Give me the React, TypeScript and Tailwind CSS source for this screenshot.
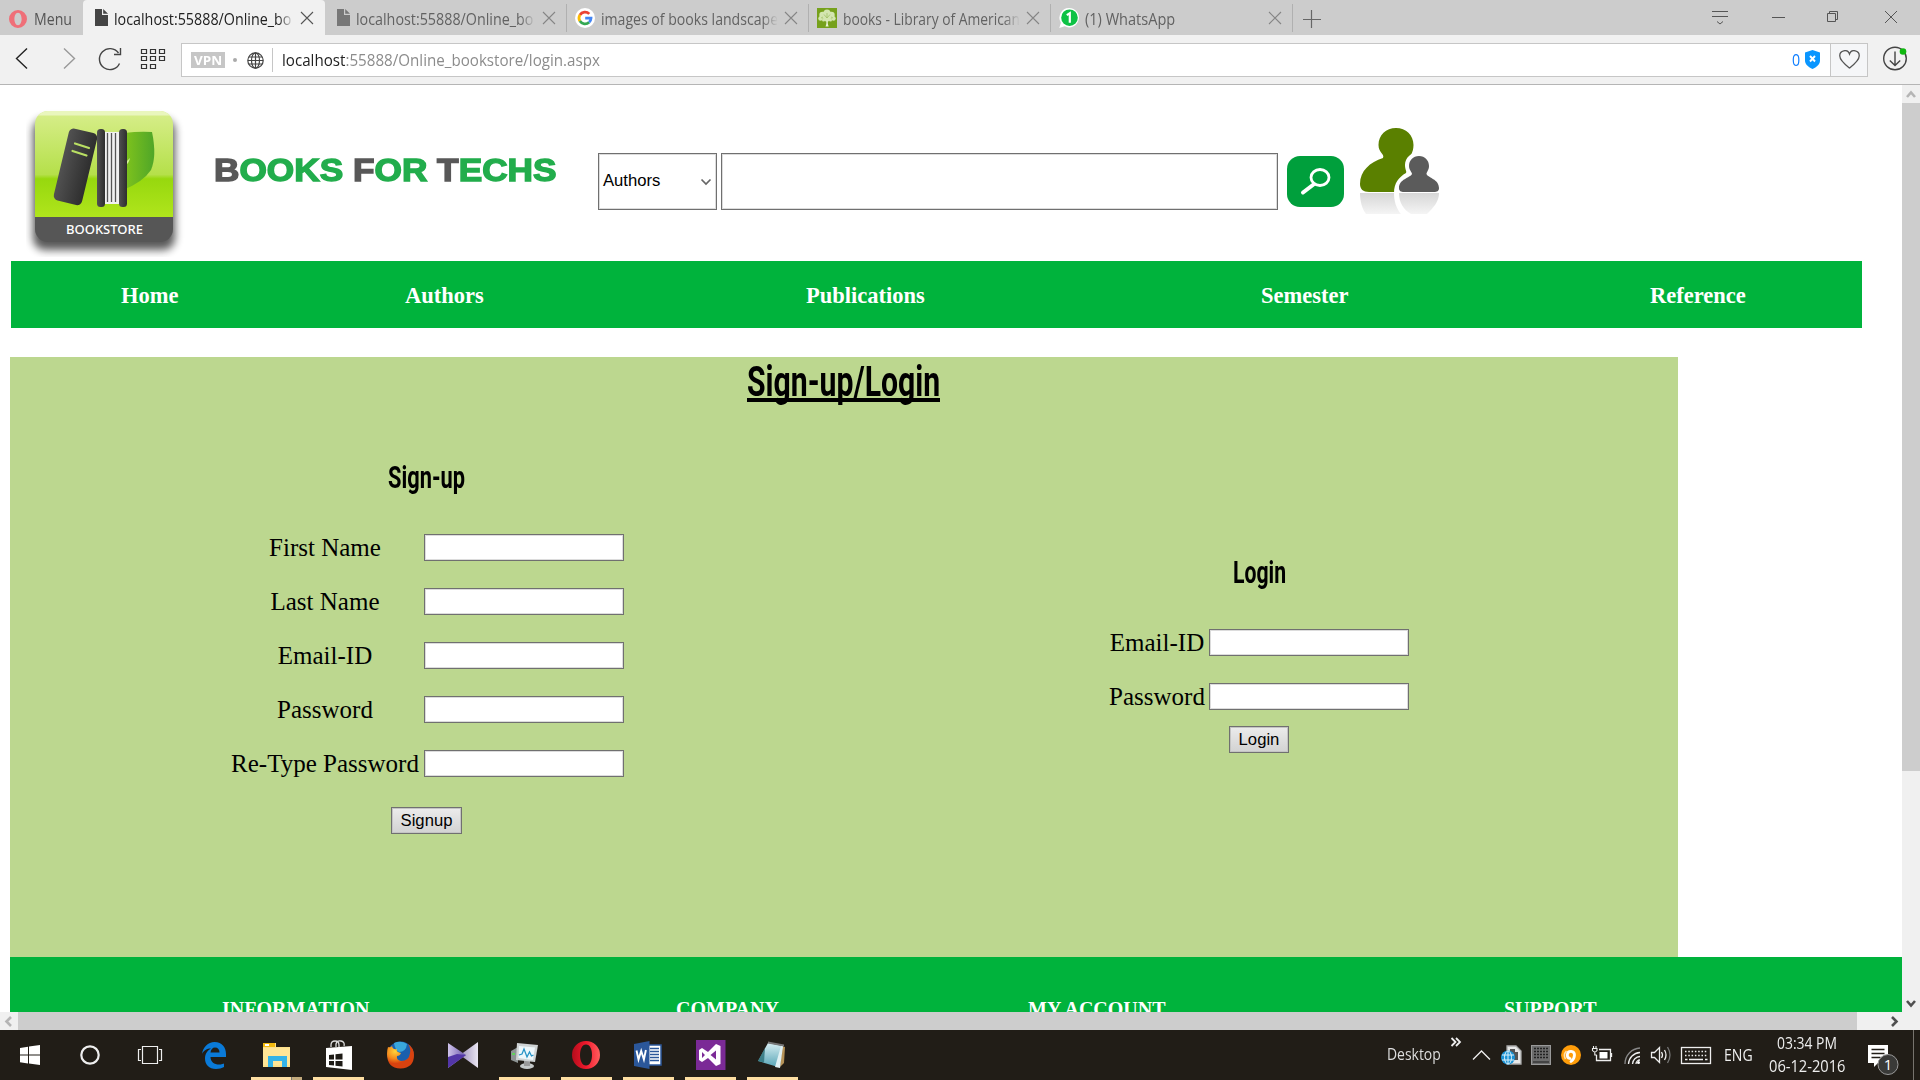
import React, { useLayoutEffect, useRef, useState } from 'react';

/** Single-line text squeezed or stretched horizontally to a given width. */
function Fit({ w, className = '', children }: { w: number; className?: string; children: React.ReactNode }) {
  const ref = useRef<HTMLSpanElement>(null);
  const [scale, setScale] = useState(1);
  useLayoutEffect(() => {
    if (ref.current) setScale(w / ref.current.offsetWidth);
  }, [w]);
  return (
    <span className={`block shrink-0 whitespace-nowrap ${className}`} style={{ width: w }}>
      <span ref={ref} className="inline-block origin-left" style={{ transform: `scaleX(${scale})` }}>
        {children}
      </span>
    </span>
  );
}

const ui = "font-['Open_Sans',sans-serif]";

function PageIcon({ color }: { color: string }) {
  return (
    <svg width="13" height="17" viewBox="0 0 13 17" className="shrink-0">
      <path d="M0 0h7v6h6v11H0z" fill={color} />
      <path d="M8.2 0L13 4.8H8.2z" fill={color} />
    </svg>
  );
}

function GoogleIcon() {
  return (
    <svg width="20" height="20" viewBox="0 0 20 20" className="shrink-0">
      <circle cx="10" cy="10" r="10" fill="#fff" />
      <g fill="none" strokeWidth="2.8">
        <path d="M14.3 5.9A6 6 0 0 0 4.9 6.9" stroke="#ea4335" />
        <path d="M4.9 6.9a6 6 0 0 0 0 6.2" stroke="#fbbc05" />
        <path d="M4.9 13.1a6 6 0 0 0 9.2 1.2" stroke="#34a853" />
        <path d="M14.1 14.3A6 6 0 0 0 16 10.2h-5.8" stroke="#4285f4" />
      </g>
    </svg>
  );
}

function TreeIcon() {
  return (
    <svg width="20" height="20" viewBox="0 0 20 20" className="shrink-0">
      <rect width="20" height="20" fill="#76a11c" />
      <g fill="#d3e5b0">
        <circle cx="10" cy="5" r="3.600" /><circle cx="5.500" cy="7" r="3.200" /><circle cx="14.500" cy="7" r="3.200" />
        <circle cx="3.500" cy="10.500" r="2.200" /><circle cx="16.500" cy="10.500" r="2.200" /><circle cx="10" cy="9.500" r="4" />
        <circle cx="6.500" cy="12" r="1.500" /><circle cx="13.500" cy="12" r="1.500" />
      </g>
      <path d="M8.500 18.500c1-2 1-4 .8-6h1.500c-.1 2-.1 4 .9 6z" fill="#e8f2d4" />
      <path d="M10 10V5M10 10L7 6.500M10 10l3-3.500M4 10l2-1M16 10l-2-1" stroke="#9cbc60" strokeWidth=".7" />
    </svg>
  );
}

function WhatsAppIcon() {
  return (
    <svg width="20" height="20" viewBox="0 0 20 20" className="shrink-0">
      <path d="M10.300 0a9.700 9.700 0 1 1-4.600 18.300L.3 20l1.600-5.200A9.700 9.700 0 0 1 10.300 0z" fill="#fff" />
      <circle cx="10.500" cy="9.700" r="8.300" fill="#0ec245" />
      <path d="M7.800 7.200l3-2v9.500" stroke="#fff" strokeWidth="2.200" fill="none" />
    </svg>
  );
}

function Close({ color }: { color: string }) {
  return (
    <svg width="14" height="14" viewBox="0 0 14 14" className="shrink-0">
      <path d="M1 1l12 12M13 1L1 13" stroke={color} strokeWidth="1.100" />
    </svg>
  );
}

type TabProps = { icon: React.ReactNode; iconW: string; title: string; w: number; active?: boolean; divider?: boolean };

function Tab({ icon, iconW, title, w, active, divider }: TabProps) {
  return (
    <div className={`relative flex h-[35px] w-[242px] shrink-0 items-center ${active ? 'rounded-t-sm bg-[#f1f1f1]' : ''}`}>
      <span className={`flex shrink-0 justify-end ${iconW}`}>{icon}</span>
      <div className="relative flex h-7 flex-1 items-center pt-0.5 pl-1.5">
        <Fit w={w} className={`${ui} text-[16px] ${active ? 'text-[#222]' : 'text-[#626262]'}`}>{title}</Fit>
        {w > 150 && (
          <span className={`absolute top-0 right-0 h-full w-4 bg-linear-to-r from-transparent ${active ? 'to-[#f1f1f1]' : 'to-[#ccc]'}`} />
        )}
      </div>
      <span className="flex w-[31px] shrink-0 pl-1.5"><Close color={active ? '#555' : '#858585'} /></span>
      {divider && <span className="absolute top-1 right-0 h-7 w-px bg-[#b0b0b0]" />}
    </div>
  );
}

function TabBar() {
  return (
    <div className="flex h-[35px] bg-[#ccc]">
      <div className="flex w-[83px] shrink-0 items-center gap-[7px] pt-0.5 pl-[9px]">
        <svg width="18" height="18" viewBox="0 0 18 18">
          <path fillRule="evenodd" fill="#ef6f78" d="M9 0a9 9 0 1 1 0 18A9 9 0 0 1 9 0zm0 2.800c-2.300 0-3.600 3-3.600 6.200s1.300 6.200 3.600 6.200 3.600-3 3.600-6.200S11.300 2.800 9 2.800z" />
        </svg>
        <Fit w={38} className={`${ui} text-[16px] text-[#555]`}>Menu</Fit>
      </div>
      <Tab icon={<PageIcon color="#444" />} iconW="w-[25px]" title="localhost:55888/Online_bo" w={177} active />
      <Tab icon={<PageIcon color="#777" />} iconW="w-[25px]" title="localhost:55888/Online_bo" w={177} divider />
      <Tab icon={<GoogleIcon />} iconW="w-[28px]" title="images of books landscape" w={177} divider />
      <Tab icon={<TreeIcon />} iconW="w-[28px]" title="books - Library of American" w={177} divider />
      <Tab icon={<WhatsAppIcon />} iconW="w-[28px]" title="(1) WhatsApp" w={90} divider />
      <svg width="18" height="18" viewBox="0 0 18 18" className="mt-[10px] ml-[10px] shrink-0">
        <path d="M8.500 0v18M0 9.500h18" stroke="#666" strokeWidth="1.200" />
      </svg>
      <svg width="220" height="35" viewBox="-20 0 220 35" className="ml-auto shrink-0" fill="none" stroke="#555">
        <path d="M52 17.500h13" />
        <path d="M107.500 13.500h8v8h-8zM109.500 13v-1.500h8v8H116" />
        <path d="M165 11l12 12M177 11l-12 12" />
        <path d="M-8 11.500H8M-8 16.500H8M-3 21.500l3 2.500 3-2.500" />
      </svg>
    </div>
  );
}

function Toolbar() {
  return (
    <div className="flex h-[50px] items-start border-b border-[#b5b5b5] bg-[#f1f1f1] pt-2">
      <svg width="181" height="34" viewBox="0 0 181 34" className="shrink-0" fill="none" stroke="#444" strokeWidth="1.400">
        <path d="M27 5.500L16.500 15.500 27 25.500" stroke="#222" />
        <path d="M64 5.500L74.500 15.500 64 25.500" stroke="#999" />
        <path d="M119.500 20.500a10.500 10.500 0 1 1-1-10.500M120.500 5v6.500h-6.500" />
        <path d="M141.500 6.500h5v4h-5zM150.500 6.500h5v4h-5zM159.500 6.500h5v4h-5zM141.500 13.500h5v4h-5zM150.500 13.500h5v4h-5zM159.500 13.500h5v4h-5zM141.500 21.500h5v4h-5zM150.500 21.500h5v4h-5z" stroke="#333" strokeWidth="1.200" />
      </svg>
      <div className="flex h-[34px] w-[1687px] shrink-0 items-center border border-[#c6c6c6] bg-white pl-[9px]">
        <span className={`flex h-4 w-[34px] items-center justify-center bg-[#c6c6c6] ${ui}`}>
          <Fit w={28} className="text-[13px] leading-4 font-bold text-white">VPN</Fit>
        </span>
        <span className="ml-2 h-1 w-1 rounded-full bg-[#aaa]" />
        <svg width="17" height="17" viewBox="0 0 17 17" className="ml-2.5" fill="none" stroke="#444" strokeWidth="1.200">
          <circle cx="8.500" cy="8.500" r="7.700" /><ellipse cx="8.500" cy="8.500" rx="4" ry="7.700" />
          <path d="M8.500 1v15M1 8.500h15M2 5h13M2 12h13" />
        </svg>
        <span className="ml-2 h-6 w-px bg-[#c6c6c6]" />
        <Fit w={318} className={`ml-[9px] text-[16px] text-[#8c8c8c] ${ui}`}>
          <span className="text-[#222]">localhost</span>:55888/Online_bookstore/login.aspx
        </Fit>
        <Fit w={8} className={`ml-auto text-[16px] text-[#0a7cff] ${ui}`}>0</Fit>
        <svg width="15" height="19" viewBox="0 0 15 19" className="mr-[10px] mb-0.5 ml-[5px]">
          <path d="M7.500 0L15 2.500v8c0 4-3.500 6.500-7.500 8.500C3.500 17 0 14.500 0 10.500v-8z" fill="#0a96ff" />
          <path d="M5 6l5 5.500M10 6l-5 5.500" stroke="#fff" strokeWidth="1.900" />
        </svg>
        <span className="flex h-full w-[37px] shrink-0 items-center justify-center border-l border-[#c6c6c6] bg-[#f5f6f8]">
          <svg width="21" height="19" viewBox="0 0 21 19" className="mb-0.5" fill="none" stroke="#555" strokeWidth="1.300">
            <path d="M10.500 18C6 14.500.8 10.500.8 6A5 5 0 0 1 10.500 4 5 5 0 0 1 20.200 6c0 4.500-5.200 8.500-9.700 12z" />
          </svg>
        </span>
      </div>
      <svg width="26" height="26" viewBox="0 0 26 26" className="mt-[3px] ml-[14px] shrink-0" fill="none" stroke="#444" strokeWidth="1.400">
        <circle cx="13" cy="12.500" r="11.300" /><path d="M13 5.500v14M7.800 14.500L13 19.500l5.200-5" />
        <circle cx="21" cy="5.500" r="3.300" fill="#0fb80f" stroke="none" />
      </svg>
    </div>
  );
}

function Logo() {
  return (
    <svg width="160" height="150" viewBox="0 0 160 150" className="shrink-0">
      <defs>
        <linearGradient id="lg" x1="0" y1="0" x2="0" y2="1">
          <stop offset="0" stopColor="#d8ee8c" /><stop offset=".6" stopColor="#b5e04a" />
          <stop offset=".64" stopColor="#97d80e" /><stop offset="1" stopColor="#b0e51c" />
        </linearGradient>
        <linearGradient id="leaf"><stop offset="0" stopColor="#83c51c" /><stop offset="1" stopColor="#4fa628" /></linearGradient>
        <linearGradient id="bk"><stop offset="0" stopColor="#515151" /><stop offset="1" stopColor="#2e2e2e" /></linearGradient>
        <clipPath id="tile"><rect x="9" y="4" width="138" height="131" rx="13" /></clipPath>
        <filter id="sh" x="-20%" y="-20%" width="140%" height="140%"><feGaussianBlur stdDeviation="4.500" /></filter>
      </defs>
      <rect x="7" y="12" width="142" height="131" rx="12" fill="#000" opacity=".65" filter="url(#sh)" />
      <g clipPath="url(#tile)">
        <rect x="9" y="4" width="138" height="106" fill="url(#lg)" />
        <rect x="9" y="4" width="138" height="4.500" fill="#e9f6bd" />
        <rect x="9" y="110" width="138" height="26" fill="#565656" />
      </g>
      <path d="M98 26q16-2 28-1 5 24-1 38-8 12-28 20z" fill="url(#leaf)" />
      <path d="M100 58q3-2 4-7l-3 3z" fill="#d6ef9a" />
      <rect x="0" y="0" width="29" height="74" rx="5" transform="translate(44 20.500) rotate(13.500)" fill="url(#bk)" />
      <path d="M49 36.500l14 4.500M46.500 44l14 4.500" stroke="#b9df63" strokeWidth="2.200" strokeLinecap="round" />
      <rect x="78" y="25" width="16" height="72" fill="#f1f1f1" />
      <path d="M81.500 26v69M85.500 26v69M89.500 26v69" stroke="#555" strokeWidth="1.300" />
      <rect x="71" y="22" width="8" height="78" rx="3.500" fill="url(#bk)" />
      <rect x="93" y="22" width="8" height="78" rx="3.500" fill="url(#bk)" />
      <text x="40" y="127" textLength="77" lengthAdjust="spacingAndGlyphs" fontFamily="Noto Sans, sans-serif" fontWeight="500" fontSize="13" fill="#fff">BOOKSTORE</text>
    </svg>
  );
}

function Header() {
  const field = 'border border-[#707070] bg-white shadow-[inset_0_0_0_1px_#dcdcdc]';
  return (
    <div className="flex h-[176px] items-start pl-[26px]">
      <div className="mt-[22px] flex"><Logo /></div>
      <Fit w={342} className="mt-[65px] ml-[28px] font-['Liberation_Sans',sans-serif] text-[31px] leading-[42px] font-bold text-[#22ad4c] [-webkit-text-stroke:1.4px_#22ad4c]">
        <span className="text-[#585858] [-webkit-text-stroke:1.4px_#585858]">B</span>OOKS{' '}
        <span className="text-[#585858] [-webkit-text-stroke:1.4px_#585858]">F</span>OR{' '}
        <span className="text-[#585858] [-webkit-text-stroke:1.4px_#585858]">T</span>ECHS
      </Fit>
      <div className={`mt-[68px] ml-[42px] flex h-[57px] w-[119px] shrink-0 items-center justify-between pr-1 pb-0.5 pl-[4px] font-['Liberation_Sans',sans-serif] text-[16.67px] text-black ${field}`}>
        <span>Authors</span>
        <svg width="12" height="8" viewBox="0 0 12 8" className="mt-0.5"><path d="M1.500 1.500L6 6l4.500-4.500" fill="none" stroke="#666" strokeWidth="1.700" /></svg>
      </div>
      <input className={`mt-[68px] ml-1 h-[57px] w-[557px] shrink-0 ${field}`} />
      <svg width="57" height="51" viewBox="0 0 57 51" className="mt-[71px] ml-[9px] shrink-0">
        <rect width="57" height="51" rx="13" fill="#009f3c" />
        <ellipse cx="33" cy="21.500" rx="9" ry="8" fill="none" stroke="#fff" strokeWidth="2.800" />
        <path d="M26.500 28.500L16 36.500" stroke="#fff" strokeWidth="4" strokeLinecap="round" />
      </svg>
      <svg width="82" height="90" viewBox="0 0 82 90" className="mt-[42px] ml-[15px] shrink-0">
        <defs>
          <linearGradient id="refl" x1="0" y1="0" x2="0" y2="1"><stop offset="0" stopColor="#d6d6d6" /><stop offset="1" stopColor="#f5f5f5" /></linearGradient>
        </defs>
        <path d="M37 1c10 0 17.500 7 17.500 17 0 8-4 11-5 17-.5 6 5 9 10 14L68 65H10c-6 0-9-3-9-8C1 44 11 35 24 31c2-4-4.500-5-4.500-13C19.500 8 27 1 37 1z" fill="#5a8000" />
        <path d="M60 25c-8 0-14 6-14 13 0 5 2 6 1 8-7 4-12 10-12 20h46V40z" fill="#fff" />
        <path d="M60 29c6 0 10 4.500 10 10 0 4-2.500 6-2.500 8C69 51 80 52 80 61c0 3-2 4-5 4H45c-3 0-5-1-5-4 0-9 11-10 13-14 0-2-3-4-3-8 0-5.500 4-10 10-10z" fill="#5b5b5b" />
        <path d="M1 66h34c0 8 2 15 7 21H7C3 82 1 74 1 66zM40 66h40c0 9-6 15-12 21H52c-7-4-12-11-12-21z" fill="url(#refl)" />
      </svg>
    </div>
  );
}

function Nav() {
  return (
    <nav className="ml-[11px] grid h-[67px] w-[1851px] grid-cols-[284px_401px_455px_389px_auto] items-center bg-[#00b33c] pt-0.5 pl-[110px] font-['Liberation_Serif',serif] text-[22.5px] font-bold text-white">
      <span>Home</span><span>Authors</span><span>Publications</span><span>Semester</span><span>Reference</span>
    </nav>
  );
}

const agency = "font-['Roboto',sans-serif] font-bold text-black";

function Field({ label, cell }: { label: string; cell: string }) {
  return (
    <div className="flex h-[54px] items-center">
      <label className={`shrink-0 pt-0.5 text-center whitespace-nowrap ${cell}`}>{label}</label>
      <input className="h-[27px] w-[200px] shrink-0 border border-[#707070] bg-white shadow-[inset_0_0_0_1px_#dcdcdc]" />
    </div>
  );
}

function FormButton({ children, size }: { children: React.ReactNode; size: string }) {
  return (
    <button className={`h-[27px] border border-[#707070] bg-linear-to-b from-[#ececec] to-[#d2d2d2] font-['Liberation_Sans',sans-serif] text-[16.67px] leading-[24px] text-black shadow-[inset_0_0_0_1px_#c4c4c4] ${size}`}>
      {children}
    </button>
  );
}

function Panel() {
  return (
    <main className="mt-[29px] ml-[10px] h-[600px] w-[1668px] bg-[#bcd78f] font-['Liberation_Serif',serif] text-[25px] text-black">
      <div className="ml-[737px] flex h-[53px] w-[193px] flex-col">
        <Fit w={193} className={`${agency} h-[41px] text-[43px] leading-[48px]`}>Sign-up/Login</Fit>
        <span className="h-1 bg-black" />
      </div>
      <div className="flex">
        <section className="ml-[221px] flex w-[393px] flex-col items-center">
          <Fit w={77} className={`${agency} mt-[47px] mr-[2px] h-[63px] text-[32px] leading-[40px]`}>Sign-up</Fit>
          <Field label="First Name" cell="mr-[5px] w-[188px]" />
          <Field label="Last Name" cell="mr-[5px] w-[188px]" />
          <Field label="Email-ID" cell="mr-[5px] w-[188px]" />
          <Field label="Password" cell="mr-[5px] w-[188px]" />
          <Field label="Re-Type Password" cell="mr-[5px] w-[188px]" />
          <div className="mt-[17px] mr-[2px] flex"><FormButton size="w-[71px]">Signup</FormButton></div>
        </section>
        <section className="ml-[485px] flex w-[300px] flex-col items-center">
          <Fit w={53} className={`${agency} mt-[142px] h-[63px] text-[32px] leading-[40px]`}>Login</Fit>
          <Field label="Email-ID" cell="mr-[4px] w-[96px]" />
          <Field label="Password" cell="mr-[4px] w-[96px]" />
          <div className="mt-[3px] flex"><FormButton size="w-[60px]">Login</FormButton></div>
        </section>
      </div>
    </main>
  );
}

function Footer() {
  return (
    <footer className="ml-[10px] grid h-[55px] grid-cols-[454px_352px_476px_auto] overflow-hidden bg-[#00b33c] pt-[41px] pl-[212px] font-['Liberation_Serif',serif] text-[20px] leading-[23px] font-bold text-white">
      <span>INFORMATION</span><span>COMPANY</span><span>MY ACCOUNT</span><span>SUPPORT</span>
    </footer>
  );
}

function Chevron({ d, color }: { d: string; color: string }) {
  return <svg width="18" height="18" viewBox="0 0 18 18" className="shrink-0"><path d={d} fill="none" stroke={color} strokeWidth="2.600" /></svg>;
}

const taskIcons: { icon: React.ReactNode; bar?: boolean; stacked?: boolean }[] = [
  { stacked: true, bar: true, icon: (
    <svg width="30" height="30" viewBox="0 0 30 30"><path d="M1 3h13v4h14v20H1z" fill="#fde08a" /><path d="M1 3h12v4H1z" fill="#f2b90f" /><path d="M3 4h4v2H3z" fill="#fff" /><path d="M1 8h27v17H1z" fill="#ffe596" /><path d="M6 27V16h19v11h-5v-6h-9v6z" fill="#33b3e8" /></svg>) },
  { bar: true, icon: (
    <svg width="30" height="30" viewBox="0 0 30 30"><path d="M7 7V5q0-4 4-4t4 4v2M12 7V4q1-4 5-3t3 5" fill="none" stroke="#ddd" strokeWidth="1.300" /><path d="M2 8l26-2v24L2 27z" fill="#fff" /><path d="M5 15l5-.5v5H5zM11.500 14.200l7-.7v6h-7zM5 21h5v4.500L5 25zM11.500 21h7v5.500l-7-.7z" fill="#1e1b16" /></svg>) },
  { icon: (
    <svg width="30" height="30" viewBox="0 0 30 30"><defs><radialGradient id="ff" cx=".3" cy=".3"><stop offset="0" stopColor="#ffd43a" /><stop offset=".6" stopColor="#f58a1c" /><stop offset="1" stopColor="#d8420f" /></radialGradient></defs><circle cx="14.500" cy="14.500" r="13" fill="#1a5fae" /><path d="M8 3q7-3 13 1-1 8-8 8-4-2-5-9z" fill="#39a7dc" /><path d="M2 7q2 1 4-1 1 4 5 3-1 2 1 3l3 1q-1 3-4 3-1 4 4 5 8 0 9-8 1-5-2-9 6 4 6 11 0 13-13.500 13.500Q1 28 1 14 1 10 2 7z" fill="url(#ff)" /></svg>) },
  { icon: (
    <svg width="30" height="30" viewBox="0 0 30 30"><defs><linearGradient id="km"><stop offset="0" stopColor="#cfc3ea" /><stop offset="1" stopColor="#6a56ac" /></linearGradient><linearGradient id="km2"><stop offset="0" stopColor="#9d90bb" /><stop offset="1" stopColor="#eae6f2" /></linearGradient></defs><path d="M30 2v26L12 15z" fill="url(#km2)" /><path d="M0 3l18 12L0 28z" fill="url(#km)" /><path d="M0 28V17l9-3 9 1z" fill="#5336a8" /></svg>) },
  { bar: true, icon: (
    <svg width="30" height="30" viewBox="0 0 30 30"><path d="M1 11l7-4v16l-7-3z" fill="#8d9494" /><path d="M2 13h3v2H2z" fill="#5fd35a" /><ellipse cx="17" cy="26" rx="7" ry="3" fill="#c5c9c9" /><path d="M14 20h6v6h-6z" fill="#999" /><path d="M7 3l21 2-3 17-19-2z" fill="#cfd3d4" /><path d="M9 6l16 1.500L23 20 8.500 18z" fill="#eef7fb" /><path d="M9 15l3-1 2-5 3 8 2.500-5 2 4 2-1" fill="none" stroke="#2793c6" strokeWidth="1.300" /></svg>) },
  { bar: true, icon: (
    <svg width="30" height="30" viewBox="0 0 30 30"><defs><linearGradient id="op"><stop offset="0" stopColor="#b40d1c" /><stop offset=".5" stopColor="#f1192c" /><stop offset="1" stopColor="#ff5e5e" /></linearGradient></defs><path fillRule="evenodd" fill="url(#op)" d="M14 1a14 14 0 1 1 0 28 14 14 0 0 1 0-28zm0 3.500c-4 0-6 5-6 10.500s2 10.500 6 10.500S20 20.500 20 15 18 4.500 14 4.500z" /></svg>) },
  { bar: true, icon: (
    <svg width="30" height="30" viewBox="0 0 30 30"><path d="M13 5h14v20H13z" fill="#fff" stroke="#2b579a" strokeWidth="1.500" /><path d="M16 8.500h9M16 11.500h9M16 14.500h9M16 17.500h9M16 20.500h9" stroke="#2b579a" strokeWidth="1.300" /><path d="M0 4l15.500-3v28L0 26z" fill="#2b579a" /><path d="M2.500 10.500l2 9 2.700-8.500 2.700 8.500 2-9.500" fill="none" stroke="#fff" strokeWidth="1.900" /></svg>) },
  { bar: true, icon: (
    <svg width="30" height="30" viewBox="0 0 30 30"><rect width="29.500" height="30" fill="#7b2a96" /><path fillRule="evenodd" fill="#fff" d="M20 4l4.500 2v18L20 26l-8-8-6 4-3-2V10l3-2 6 4zM20 10.500L14.500 15l5.500 4.500zM6 12v6l3-3z" /></svg>) },
  { bar: true, icon: (
    <svg width="30" height="30" viewBox="0 0 30 30"><defs><linearGradient id="np" x2="0" y2="1"><stop offset="0" stopColor="#d7eef2" /><stop offset="1" stopColor="#58a5b6" /></linearGradient></defs><path d="M24 6l3 1-1 16-4 4z" fill="#b59257" /><path d="M10 3l15 3-5 21L0 21z" fill="url(#np)" /><path d="M0 21L7 8l-1 14.500z" fill="#2b6f78" opacity=".8" /><path d="M25 6l-3 22-5-1 6-21z" fill="#e0f0f3" /><path d="M10 1.500l16 3v2l-16-3z" fill="#777" /></svg>) },
];

function Taskbar() {
  return (
    <div className="flex h-[50px] bg-[#211d17] text-[#eee]">
      <svg width="251" height="50" viewBox="0 0 251 50" className="shrink-0">
        <path d="M20 18l8-1.200V24.500h-8zM29 16.600L40 15v9.500H29zM20 25.500h8v8L20 32.300zM29 25.500h11V35l-11-1.500z" fill="#fff" />
        <circle cx="90" cy="25" r="8.700" fill="none" stroke="#eee" strokeWidth="2.200" />
        <path d="M142.500 16.500h15v17h-15zM141 19.500h-2.500v11h2.500M159 19.500h2.500v11H159" fill="none" stroke="#eee" strokeWidth="1.200" />
        <path d="M202 24c1-7 6-12 12.500-12 8 0 11.500 6 11.500 12v3h-15.500c0 5 4 7.500 8.500 7.500 2.500 0 4.500-.7 5-1V37c-2 1.300-5 2-8 2-7 0-11-4.500-11-10.500 0-5 3-8.500 6-10-4 0-7.500 2-9 5.500zM210.500 22.500h9c0-3-1.500-5-4.500-5-2.500 0-4.200 2-4.500 5z" fill="#0a7ad8" fillRule="evenodd" />
      </svg>
      {taskIcons.map((t, i) => (
        <div key={i} className="mr-[11px] flex w-[51px] shrink-0 flex-col items-center pt-[10px]">
          {t.icon}
          {t.bar && (
            <span className="mt-[7px] flex h-[3px] w-full bg-[#fddea2]">
              {t.stacked && <span className="ml-auto w-[11px] border-l border-[#777] bg-[#c2aa7d]" />}
            </span>
          )}
        </div>
      ))}
      <Fit w={54} className={`ml-[578px] pt-[12px] text-[16px] leading-[24px] text-[#ddd] ${ui}`}>Desktop</Fit>
      <svg width="276" height="50" viewBox="1442 0 276 50" className="shrink-0" fill="none" stroke="#eee" strokeWidth="1.300">
        <path d="M1452.500 8l4 4-4 4M1457 8l4 4-4 4" strokeWidth="1.800" />
        <path d="M1474 29.500l8.500-8.500 8.500 8.500" />
        <path d="M1508 16h9l5 5v13h-14z" fill="#e8e8e8" stroke="#aaa" /><path d="M1511 19h5v3h3v8h-8z" fill="#555" stroke="none" />
        <circle cx="1509" cy="27.500" r="7" fill="#1a93d6" stroke="none" /><path d="M1503 25h12M1503 30h12M1509 21v13" stroke="#d8effa" strokeWidth="1" /><ellipse cx="1509" cy="27.500" rx="3.500" ry="6.500" stroke="#d8effa" strokeWidth="1" />
        <rect x="1532.500" y="15.500" width="19" height="19" fill="#6d6d6d" stroke="#999" strokeWidth="1" />
        <path d="M1535 18.500h14M1535 21.500h14M1535 24.500h14M1535 27.500h14" stroke="#222" strokeDasharray="2 1" strokeWidth="1.500" /><path d="M1534 32h16" stroke="#444" strokeWidth="2" />
        <circle cx="1572" cy="25" r="10" fill="#ff9d0a" stroke="none" />
        <path d="M1571 28.500a3.600 3.600 0 1 1 4.500-3.500c0 3-1.500 5-3.500 6.500" stroke="#fff" strokeWidth="2.800" strokeLinecap="round" /><path d="M1566.500 29a6.500 6.500 0 0 1 1-8" stroke="#ffe2b0" strokeWidth="1.500" />
        <path d="M1600 19.500h11.500v11h-14V25M1612.500 23v4" /><path d="M1600.500 22h8v6.500h-8z" fill="#fff" stroke="none" /><path d="M1593.500 18.500h4.500v2q-1 1.500-2.200 1.500t-2.300-1.500zM1594.500 16v2.500M1597 16v2.500M1595.800 22v3h2" strokeWidth="1.100" />
        <path d="M1626 34a16 16 0 0 1 15-16" stroke="#888" /><path d="M1629.500 34a12 12 0 0 1 11.500-11.500M1633.500 34a8 8 0 0 1 7.500-7.500" /><path d="M1637 34a4 4 0 0 1 4-4" /><circle cx="1639.500" cy="32.500" r="1.500" fill="#fff" stroke="none" />
        <path d="M1652.500 22.500h3l5-5v15l-5-5h-3zM1662.500 22q2 3 0 6M1665.500 20q3 5 0 10" /><path d="M1668.500 17q5 8 0 16" stroke="#777" />
        <rect x="1682.500" y="17.500" width="29" height="16" /><path d="M1686 21.500h23M1686 25.500h23" strokeDasharray="1.500 1.800" /><path d="M1686 29.500h2.500M1690 29.500h14M1706 29.500h2.500" />
      </svg>
      <Fit w={29} className={`ml-[7px] pt-[13px] text-[16px] leading-[24px] ${ui}`}>ENG</Fit>
      <div className={`ml-[16px] flex w-[76px] flex-col items-center text-[16px] leading-[23px] ${ui}`}>
        <Fit w={60} className="pt-[2px]">03:34 PM</Fit>
        <Fit w={76}>06-12-2016</Fit>
      </div>
      <svg width="74" height="50" viewBox="1846 0 74 50" className="shrink-0">
        <path d="M1869 15h20v18h-10l-4 4v-4h-6z" fill="#fff" /><path d="M1872.500 19.500h13M1872.500 23.500h13M1872.500 27.500h9" stroke="#211d17" strokeWidth="1.400" />
        <circle cx="1889" cy="34.500" r="10" fill="#3a3a38" stroke="#999" strokeWidth="1" />
        <text x="1889" y="40" textAnchor="middle" fontSize="15" fontFamily="Open Sans, sans-serif" fill="#fff">1</text>
        <path d="M1914.500 0v50" stroke="#77746e" />
      </svg>
    </div>
  );
}

export default function App() {
  return (
    <div className="flex h-[1080px] w-[1920px] flex-col overflow-hidden bg-white">
      <TabBar />
      <Toolbar />
      <div className="flex h-[927px]">
        <div className="w-[1902px] shrink-0 overflow-hidden">
          <Header />
          <Nav />
          <Panel />
          <Footer />
        </div>
        <div className="flex w-[18px] flex-col bg-[#f0f0f0]">
          <Chevron d="M5 12l4-4.500 4 4.500" color="#b5b5b5" />
          <div className="h-[668px] bg-[#cdcdcd]" />
          <div className="mt-auto flex"><Chevron d="M5 7l4 4.500 4-4.500" color="#505050" /></div>
        </div>
      </div>
      <div className="flex h-[18px] bg-[#f0f0f0]">
        <Chevron d="M11 5L6.500 9.500 11 14" color="#b5b5b5" />
        <div className="w-[1839px] bg-[#cdcdcd]" />
        <div className="mr-[17px] ml-auto flex"><Chevron d="M7 5l4.500 4.500L7 14" color="#505050" /></div>
      </div>
      <Taskbar />
    </div>
  );
}
